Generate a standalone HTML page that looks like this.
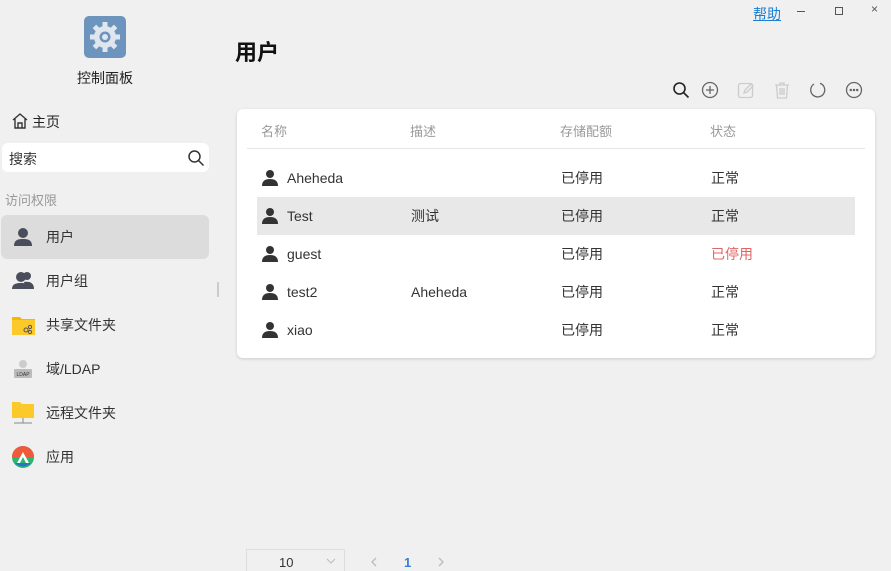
<!DOCTYPE html>
<html><head><meta charset="utf-8"><style>
*{margin:0;padding:0;box-sizing:border-box}
html,body{width:891px;height:571px;overflow:hidden}
body{background:#f0f0f0;font-family:"Liberation Sans","Noto Sans CJK SC",sans-serif;font-size:14px;color:#333;position:relative}
.a{position:absolute}
.nav{position:absolute;left:1px;width:208px;height:44px;display:flex;align-items:center;border-radius:6px}
.nav span{position:absolute;left:45px;font-size:14px;color:#333}
.nav svg{position:absolute;left:11px}
.card{position:absolute;left:237px;top:109px;width:638px;height:249px;background:#fff;border-radius:6px;box-shadow:0 1px 3px rgba(0,0,0,.15)}
.th{position:absolute;top:12px;color:#999;font-size:13px}
.row{position:absolute;left:20px;width:598px;height:38px}
.row div{position:absolute;top:0;line-height:38px;font-size:14px;color:#333}
.row svg{position:absolute;left:5px;top:11px}
</style></head><body>
<div class="a" style="left:84px;top:16px;width:42px;height:42px;background:#6c94bc;border-radius:5px"></div>
<svg class="a" style="left:84px;top:16px" width="42" height="42" viewBox="0 0 42 42">
<g fill="#dfe6ee"><circle cx="21" cy="21" r="11"/>
<g stroke="#dfe6ee" stroke-width="5"><line x1="21" y1="6" x2="21" y2="36"/><line x1="6" y1="21" x2="36" y2="21"/><line x1="10.4" y1="10.4" x2="31.6" y2="31.6"/><line x1="31.6" y1="10.4" x2="10.4" y2="31.6"/></g></g>
<circle cx="21" cy="21" r="5.5" fill="#6c94bc"/><circle cx="21" cy="21" r="3" fill="#dfe6ee"/></svg>
<div class="a" style="left:77px;top:68px;font-size:14px;color:#222">控制面板</div>
<svg class="a" style="left:11px;top:112px" width="18" height="18" viewBox="0 0 18 18" fill="none" stroke="#333" stroke-width="1.4"><path d="M2 8L9 2l7 6M4 7v9h10V7M7 16v-5h4v5"/></svg>
<div class="a" style="left:32px;top:112px;font-size:14px;color:#222">主页</div>
<div class="a" style="left:2px;top:143px;width:207px;height:29px;background:#fff;border-radius:6px"></div>
<div class="a" style="left:9px;top:149px;font-size:14px;color:#333">搜索</div>
<svg class="a" style="left:187px;top:149px" width="18" height="18" viewBox="0 0 18 18" fill="none" stroke="#333" stroke-width="1.5"><circle cx="7.5" cy="7.5" r="5.5"/><path d="M11.5 11.5l5 5"/></svg>
<div class="a" style="left:5px;top:190px;font-size:13px;color:#999">访问权限</div>
<div class="a" style="left:217px;top:282px;width:2px;height:15px;border-left:1px solid #ccc;border-right:1px solid #ccc"></div>

<div class="nav" style="top:215px;background:#dcdcdc"><svg width="22" height="22" viewBox="0 0 22 22" fill="#4a4e5c"><circle cx="11" cy="7" r="5"/><path d="M2 20c0-6 4-7 9-7s9 1 9 7z"/></svg><span>用户</span></div>
<div class="nav" style="top:259px"><svg width="24" height="22" viewBox="0 0 24 22" fill="#4a4e5c"><circle cx="15" cy="6" r="4"/><path d="M12 12c6-1 10 1 10 7h-8z"/><circle cx="9" cy="7" r="5"/><path d="M0 19c0-5 4-6 9-6s9 1 9 6z"/></svg><span>用户组</span></div>
<div class="nav" style="top:303px"><svg width="23" height="22" viewBox="0 0 23 22"><path d="M0 3h8l2 2h13v16H0z" fill="#f5b700"/><path d="M0 6h23v15H0z" fill="#fcc92b"/><circle cx="14" cy="16" r="2" fill="none" stroke="#555"/><circle cx="18" cy="13" r="1.6" fill="none" stroke="#555"/><circle cx="18" cy="18" r="1.6" fill="none" stroke="#555"/></svg><span>共享文件夹</span></div>
<div class="nav" style="top:347px"><svg width="22" height="22" viewBox="0 0 22 22"><circle cx="11" cy="6" r="4" fill="#ccc"/><rect x="2" y="11" width="18" height="9" rx="1" fill="#bbb"/><text x="11" y="18" font-size="5" text-anchor="middle" fill="#333" font-family="Liberation Sans">LDAP</text></svg><span>域/LDAP</span></div>
<div class="nav" style="top:391px"><svg width="22" height="24" viewBox="0 0 22 24"><path d="M0 1h8l2 2h12v14H0z" fill="#fcc92b"/><path d="M11 17v5M2 22h18" stroke="#888"/></svg><span>远程文件夹</span></div>
<div class="nav" style="top:435px"><svg width="22" height="22" viewBox="0 0 22 22"><circle cx="11" cy="11" r="11" fill="#2bb673"/><path d="M0 11A11 11 0 0 1 22 11z" fill="#ef5a3a"/><path d="M3 17A11 11 0 0 0 19 17z" fill="#2a73c8"/><path d="M5 17l6-11 6 11h-3l-3-6-3 6z" fill="#fff"/></svg><span>应用</span></div>

<div class="a" style="left:753px;top:4px;font-size:14px;color:#1a7fd4;text-decoration:underline">帮助</div>
<div class="a" style="left:797px;top:11px;width:8px;height:1px;background:#555"></div>
<div class="a" style="left:835px;top:7px;width:8px;height:8px;border:1px solid #555"></div>
<div class="a" style="left:871px;top:2px;font-size:12px;color:#555">×</div>

<div class="a" style="left:235px;top:35px;font-size:22px;font-weight:bold;color:#111">用户</div>

<svg class="a" style="left:672px;top:81px" width="18" height="18" viewBox="0 0 18 18" fill="none" stroke="#222" stroke-width="1.6"><circle cx="7.5" cy="7.5" r="5.5"/><path d="M11.5 11.5l5 5"/></svg>
<svg class="a" style="left:701px;top:81px" width="18" height="18" viewBox="0 0 18 18" fill="none" stroke="#666" stroke-width="1.3"><circle cx="9" cy="9" r="7.5"/><path d="M9 5v8M5 9h8"/></svg>
<svg class="a" style="left:737px;top:81px" width="18" height="18" viewBox="0 0 18 18" fill="none" stroke="#ccc" stroke-width="1.3"><rect x="1.5" y="2.5" width="14" height="14" rx="2"/><path d="M7 12l1-3 6-6 2 2-6 6z"/></svg>
<svg class="a" style="left:773px;top:81px" width="18" height="18" viewBox="0 0 18 18" fill="none" stroke="#ccc" stroke-width="1.3"><path d="M2 4h14M7 4V2h4v2M3.5 4l1 13h9l1-13M7 7v7M9 7v7M11 7v7"/></svg>
<svg class="a" style="left:809px;top:81px" width="18" height="18" viewBox="0 0 18 18" fill="none" stroke="#666" stroke-width="1.3"><path d="M11 2.3A7 7 0 1 1 5 3"/></svg>
<svg class="a" style="left:845px;top:81px" width="18" height="18" viewBox="0 0 18 18" fill="none" stroke="#666" stroke-width="1.3"><circle cx="9" cy="9" r="7.5"/><circle cx="5.8" cy="9" r=".6" fill="#666"/><circle cx="9" cy="9" r=".6" fill="#666"/><circle cx="12.2" cy="9" r=".6" fill="#666"/></svg>

<div class="card">
<div class="th" style="left:24px">名称</div><div class="th" style="left:173px">描述</div><div class="th" style="left:323px">存储配额</div><div class="th" style="left:473px">状态</div>
<div class="a" style="left:10px;top:39px;width:618px;height:1px;background:#e6e6e6"></div>
<div class="row" style="top:50px"><svg width="16" height="16" viewBox="0 0 16 16" fill="#333"><circle cx="8" cy="4" r="4"/><path d="M0 16c0-5 3-7 8-7s8 2 8 7z"/></svg><div style="left:30px">Aheheda</div><div style="left:304px">已停用</div><div style="left:454px">正常</div></div>
<div class="row" style="top:88px;background:#e8e8e8"><svg width="16" height="16" viewBox="0 0 16 16" fill="#333"><circle cx="8" cy="4" r="4"/><path d="M0 16c0-5 3-7 8-7s8 2 8 7z"/></svg><div style="left:30px">Test</div><div style="left:154px">测试</div><div style="left:304px">已停用</div><div style="left:454px">正常</div></div>
<div class="row" style="top:126px"><svg width="16" height="16" viewBox="0 0 16 16" fill="#333"><circle cx="8" cy="4" r="4"/><path d="M0 16c0-5 3-7 8-7s8 2 8 7z"/></svg><div style="left:30px">guest</div><div style="left:304px">已停用</div><div style="left:454px;color:#e06666">已停用</div></div>
<div class="row" style="top:164px"><svg width="16" height="16" viewBox="0 0 16 16" fill="#333"><circle cx="8" cy="4" r="4"/><path d="M0 16c0-5 3-7 8-7s8 2 8 7z"/></svg><div style="left:30px">test2</div><div style="left:154px">Aheheda</div><div style="left:304px">已停用</div><div style="left:454px">正常</div></div>
<div class="row" style="top:202px"><svg width="16" height="16" viewBox="0 0 16 16" fill="#333"><circle cx="8" cy="4" r="4"/><path d="M0 16c0-5 3-7 8-7s8 2 8 7z"/></svg><div style="left:30px">xiao</div><div style="left:304px">已停用</div><div style="left:454px">正常</div></div>
</div>

<div class="a" style="left:246px;top:549px;width:99px;height:30px;border:1px solid #ddd;background:#f0f0f0"></div>
<div class="a" style="left:279px;top:555px;font-size:13px;color:#333">10</div>
<svg class="a" style="left:326px;top:558px" width="10" height="6" viewBox="0 0 10 6" fill="none" stroke="#bbb"><path d="M1 1l4 4 4-4"/></svg>
<svg class="a" style="left:371px;top:557px" width="6" height="10" viewBox="0 0 6 10" fill="none" stroke="#bbb" stroke-width="1.3"><path d="M5 1L1 5l4 4"/></svg>
<div class="a" style="left:404px;top:555px;font-size:13px;color:#3a7fd5;font-weight:bold">1</div>
<svg class="a" style="left:438px;top:557px" width="6" height="10" viewBox="0 0 6 10" fill="none" stroke="#bbb" stroke-width="1.3"><path d="M1 1l4 4-4 4"/></svg>
</body></html>
